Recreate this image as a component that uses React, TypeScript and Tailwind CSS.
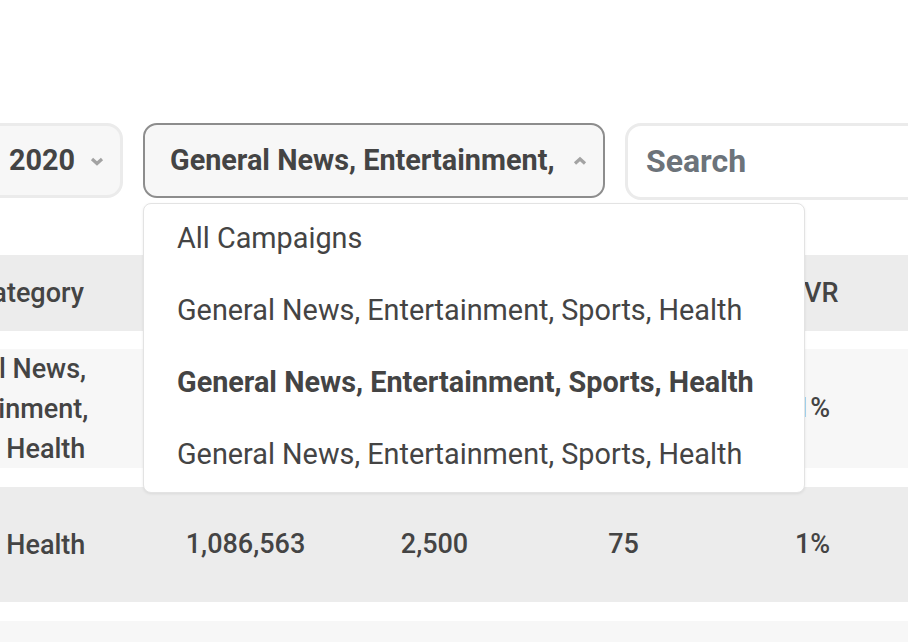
import React from "react";

const font = { fontFamily: "Roboto, 'Liberation Sans', sans-serif" };

function ChevronDown() {
  return (
    <svg width="14" height="10" viewBox="0 0 14 10" className="shrink-0">
      <polyline points="2,3 7,7.5 12,3" fill="none" stroke="#a3a3a3" strokeWidth="3.2" strokeLinejoin="miter" />
    </svg>
  );
}

function ChevronUp() {
  return (
    <svg width="14" height="10" viewBox="0 0 14 10" className="shrink-0">
      <polyline points="2,7.5 7,3 12,7.5" fill="none" stroke="#a3a3a3" strokeWidth="3.2" strokeLinejoin="miter" />
    </svg>
  );
}

const items = [
  { label: "All Campaigns", bold: false },
  { label: "General News, Entertainment, Sports, Health", bold: false },
  { label: "General News, Entertainment, Sports, Health", bold: true },
  { label: "General News, Entertainment, Sports, Health", bold: false },
];

const rows = [
  { cat: "General News, Entertainment, Sports, Health", imp: "1,086,563", clicks: "2,500", conv: "75", cvr: "1%", bg: "bg-[#f7f7f7]", h: "h-[119px]" },
  { cat: "Sports, Health", imp: "1,086,563", clicks: "2,500", conv: "75", cvr: "1%", bg: "bg-[#ececec]", h: "h-[115px]" },
  { cat: "Sports, Health", imp: "1,086,563", clicks: "2,500", conv: "75", cvr: "1%", bg: "bg-[#f7f7f7]", h: "h-[115px]" },
];

export default function App() {
  return (
    <div className="relative w-[908px] h-[642px] overflow-hidden bg-white text-[#444444]" style={font}>
      <div className="pt-[123px]">
        {/* controls */}
        <div className="flex items-start gap-[20px]">
          <div className="ml-[-60px] w-[183px] h-[75px] shrink-0 rounded-[16px] border-[3px] border-[#ebebeb] bg-[#f7f7f7] flex items-center justify-end gap-[15px] pr-[16px]">
            <span className="text-[28.8px] font-bold leading-none">2020</span>
            <ChevronDown />
          </div>
          <div className="w-[462px] h-[75px] shrink-0 rounded-[14px] border-2 border-[#8d8d8d] bg-[#f7f7f7] flex items-center justify-between pl-[25px] pr-[16px]">
            <span className="text-[28.8px] font-bold leading-none whitespace-nowrap overflow-hidden">General News, Entertainment,</span>
            <ChevronUp />
          </div>
          <div className="w-[330px] h-[77px] shrink-0 rounded-[16px] border-[3px] border-[#ebebeb] bg-white flex items-center pl-[18px] pb-[2px]">
            <span className="text-[32px] font-bold leading-none text-[#6c737a]">Search</span>
          </div>
        </div>

        {/* table */}
        <div className="mt-[55px] ml-[-132px] flex flex-col gap-[18px] font-medium text-[27px]">
          <div className="flex h-[76px] bg-[#ececec] items-center">
            <div className="w-[283px] shrink-0 text-right pr-[67px]">Category</div>
            <div className="w-[189px] shrink-0 text-center">Impressions</div>
            <div className="w-[189px] shrink-0 text-center">Clicks</div>
            <div className="w-[189px] shrink-0 text-center">Conversions</div>
            <div className="w-[189px] shrink-0 text-center">CVR</div>
          </div>
          <div className="flex flex-col gap-[19px]">
            {rows.map((r, i) => (
              <div key={i} className={`flex items-center ${r.bg} ${r.h}`}>
                <div className="w-[283px] shrink-0 flex justify-center pr-[20px]">
                  <div className="w-[200px] text-center leading-[40px]">{r.cat}</div>
                </div>
                <div className="w-[189px] shrink-0 text-center">{r.imp}</div>
                <div className="w-[189px] shrink-0 text-center">{r.clicks}</div>
                <div className="w-[189px] shrink-0 text-center">{r.conv}</div>
                <div className="w-[189px] shrink-0 text-center">{r.cvr}</div>
              </div>
            ))}
          </div>
        </div>
      </div>

      {/* dropdown menu */}
      <div className="absolute left-[143px] top-[203px] w-[662px] h-[290px] rounded-[8px] border border-[#e3e3e3] bg-white shadow-[0_1px_3px_rgba(0,0,0,0.08)] flex flex-col">
        {items.map((it, i) => (
          <div
            key={i}
            className={`h-[72px] shrink-0 flex items-center pl-[33px] pb-[3px] text-[28.8px] whitespace-nowrap ${it.bold ? "font-bold" : "font-normal"}`}
          >
            {it.label}
          </div>
        ))}
      </div>
    </div>
  );
}
